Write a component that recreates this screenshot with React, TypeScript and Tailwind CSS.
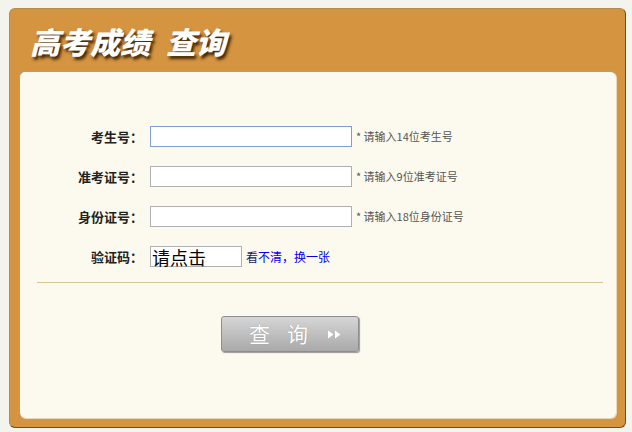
import React from 'react';

const fields = [
  { label: '考生号：', hint: '* 请输入14位考生号', focus: true },
  { label: '准考证号：', hint: '* 请输入9位准考证号', focus: false },
  { label: '身份证号：', hint: '* 请输入18位身份证号', focus: false },
];

const App: React.FC = () => {
  return (
    <div
      className="w-[632px] h-[432px] bg-[#f4f4ee] pt-[8px] pl-[9px] overflow-hidden"
      style={{ fontFamily: '"Noto Sans CJK SC", "Noto Sans", sans-serif' }}
    >
      <div className="w-[617px] h-[420px] bg-[#d49440] rounded-[6px] border border-[#b88a4e] border-r-[#7a4c15] border-b-[#7a4c15] flex flex-col pl-[9px] pr-[9px] pb-[9px]">
        {/* header */}
        <div className="h-[62px] flex items-center pl-[11px] pt-[2px]">
          <h1 className="text-[30px] font-black italic text-white [text-shadow:2px_3px_3px_#3f2406]">
            高考成绩<span className="ml-[16px]">查询</span>
          </h1>
        </div>

        {/* body */}
        <div className="flex-1 bg-[#fcfaee] rounded-[6px] border-t border-l border-[#a5a095] shadow-[1px_1px_0_#e8d9b8] pt-[54px]">
          <div className="flex flex-col gap-[19px]">
            {fields.map((f) => (
              <div key={f.label} className="flex items-center h-[21px]">
                <span className="w-[123px] text-right text-[13px] font-bold text-[#222]">{f.label}</span>
                <input
                  className={`ml-[7px] w-[202px] h-[21px] bg-white border ${f.focus ? 'border-[#7d9fd8]' : 'border-[#b0b0b0]'} outline-none`}
                />
                <span className="ml-[4px] text-[11px] text-[#555]">{f.hint}</span>
              </div>
            ))}
            <div className="flex items-center h-[21px]">
              <span className="w-[123px] text-right text-[13px] font-bold text-[#222]">验证码：</span>
              <div className="ml-[7px] w-[92px] h-[21px] bg-white border border-[#b0b0b0] flex items-center px-[1px] text-[18px] leading-none text-black">
                请点击
              </div>
              <span className="ml-[4px] text-[12px] text-[#1a1a70]">看</span>
              <span className="text-[12px] text-[#0000ee]">不清，换一张</span>
            </div>
          </div>

          <div className="mt-[15px] ml-[17px] mr-[13px] border-t border-[#d4c68e]" />

          <div className="mt-[33px] pl-[201px]">
            <button className="w-[138px] h-[36px] rounded-[3px] border border-[#8e8e8e] bg-gradient-to-b from-[#d6d6d6] to-[#a9a9a9] shadow-[1px_1px_1px_#999] flex items-center pl-[27px] text-white">
              <span className="text-[21px] tracking-[17px] [text-shadow:0_0_1px_#888]">查询</span>
              <svg width="15" height="9" viewBox="0 0 15 9" className="ml-[2px]">
                <path d="M1 0.5 L6.5 4.5 L1 8.5 Z" fill="#fff" />
                <path d="M8 0.5 L13.5 4.5 L8 8.5 Z" fill="#fff" />
              </svg>
            </button>
          </div>
        </div>
      </div>
    </div>
  );
};

export default App;
